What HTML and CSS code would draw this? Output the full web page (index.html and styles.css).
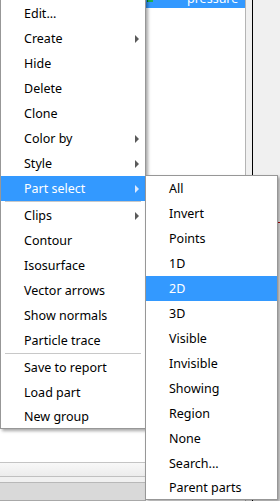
FILE: index.html
```html
<!DOCTYPE html>
<html lang="en">
<head>
  <meta charset="UTF-8">
  <meta name="viewport" content="width=device-width, initial-scale=1.0">
  <title>Part menu</title>
  <link rel="stylesheet" href="styles.css">
</head>
<body>
  <div class="desk">
    <div class="left-pane">
      <div class="left-body"></div>
      <div class="bar bar-a"></div>
      <div class="bar bar-b"></div>
      <div class="bar bar-c"></div>
    </div>
    <div class="tree">
      <div class="tree-row selected">
        <span class="node-icon"></span>
        <span class="node-name">pressure</span>
      </div>
    </div>
    <div class="splitter"></div>
    <div class="view">
      <div class="red-tick"></div>
    </div>
  </div>

  <ul class="menu main-menu">
    <li class="item">Edit...</li>
    <li class="item has-sub">Create</li>
    <li class="item">Hide</li>
    <li class="item">Delete</li>
    <li class="item">Clone</li>
    <li class="item has-sub">Color by</li>
    <li class="item has-sub">Style</li>
    <li class="item has-sub active">Part select</li>
    <li class="sep"></li>
    <li class="item has-sub">Clips</li>
    <li class="item">Contour</li>
    <li class="item">Isosurface</li>
    <li class="item">Vector arrows</li>
    <li class="item">Show normals</li>
    <li class="item">Particle trace</li>
    <li class="sep"></li>
    <li class="item">Save to report</li>
    <li class="item">Load part</li>
    <li class="item last">New group</li>
  </ul>

  <ul class="menu sub-menu">
    <li class="item">All</li>
    <li class="item">Invert</li>
    <li class="item">Points</li>
    <li class="item">1D</li>
    <li class="item active">2D</li>
    <li class="item">3D</li>
    <li class="item">Visible</li>
    <li class="item">Invisible</li>
    <li class="item">Showing</li>
    <li class="item">Region</li>
    <li class="item">None</li>
    <li class="item">Search...</li>
    <li class="item last">Parent parts</li>
  </ul>
</body>
</html>
```

FILE: styles.css
```css
body {
  margin: 0;
  width: 280px;
  height: 501px;
  overflow: hidden;
  position: relative;
  font-family: "Noto Sans", "Open Sans", sans-serif;
  font-size: 12.5px;
  color: #000;
  background-color: #f0f0f0;
}

/* background window */
.desk {
  display: flex;
  height: 501px;
}

.left-pane {
  width: 145px;
  display: flex;
  flex-direction: column;
  background-color: #fff;
  border-right: 1px solid #a8a8a8;
}

.left-body {
  flex: 1;
}

.bar-a {
  height: 13px;
  border-top: 1px solid #c4c4c4;
  background: linear-gradient(#f8f8f8, #ececec);
}

.bar-b {
  height: 5px;
  border-top: 1px solid #c0c0c0;
  background-color: #f0f0f0;
}

.bar-c {
  height: 17px;
  border-top: 1px solid #b8b8b8;
  border-bottom: 1px solid #a8a8a8;
  background-color: #d9d9d9;
}

.tree {
  width: 99px;
  background-color: #fff;
  border-right: 1px solid #b4b4b4;
}

.tree-row {
  display: flex;
  align-items: flex-start;
  height: 19px;
  margin-top: -11px;
  line-height: 19px;
}

.tree-row.selected {
  background-color: #3399ff;
  color: #fff;
}

.node-icon {
  width: 5px;
  height: 13px;
  margin-left: 1px;
  background-color: #22b14c;
  border-left: 1px solid #0b6b23;
}

.node-name {
  margin-left: 34px;
}

.splitter {
  width: 6px;
  border-right: 1px solid #000;
  background-color: #f0f0f0;
}

.view {
  flex: 1;
  position: relative;
  background-color: #f0f0f0;
}

.red-tick {
  position: absolute;
  top: 222px;
  left: 0;
  right: 0;
  height: 1px;
  background-color: #c00000;
}

/* popup menus */
.menu {
  position: absolute;
  margin: 0;
  padding: 0;
  list-style: none;
  background-color: #fff;
  border: 1px solid #979797;
  box-shadow: 2px 2px 3px rgba(0, 0, 0, 0.35);
}

.main-menu {
  left: 0;
  top: -2px;
  width: 144px;
  padding-top: 2px;
}

.sub-menu {
  left: 145px;
  top: 175px;
  width: 131px;
}

.item {
  position: relative;
  height: 25px;
  line-height: 25px;
  padding-left: 23px;
  white-space: nowrap;
}

.item.last {
  height: 23px;
  line-height: 24px;
}

.item.active {
  background-color: #3399ff;
  color: #fff;
}

.has-sub::after {
  content: "";
  position: absolute;
  right: 6px;
  top: 9px;
  border-left: 4px solid #5a5a5a;
  border-top: 4px solid transparent;
  border-bottom: 4px solid transparent;
}

.has-sub.active::after {
  border-left-color: #dce9ff;
}

.sep {
  height: 1px;
  margin: 0 4px 1px;
  background-color: #c8c8c8;
}
```
